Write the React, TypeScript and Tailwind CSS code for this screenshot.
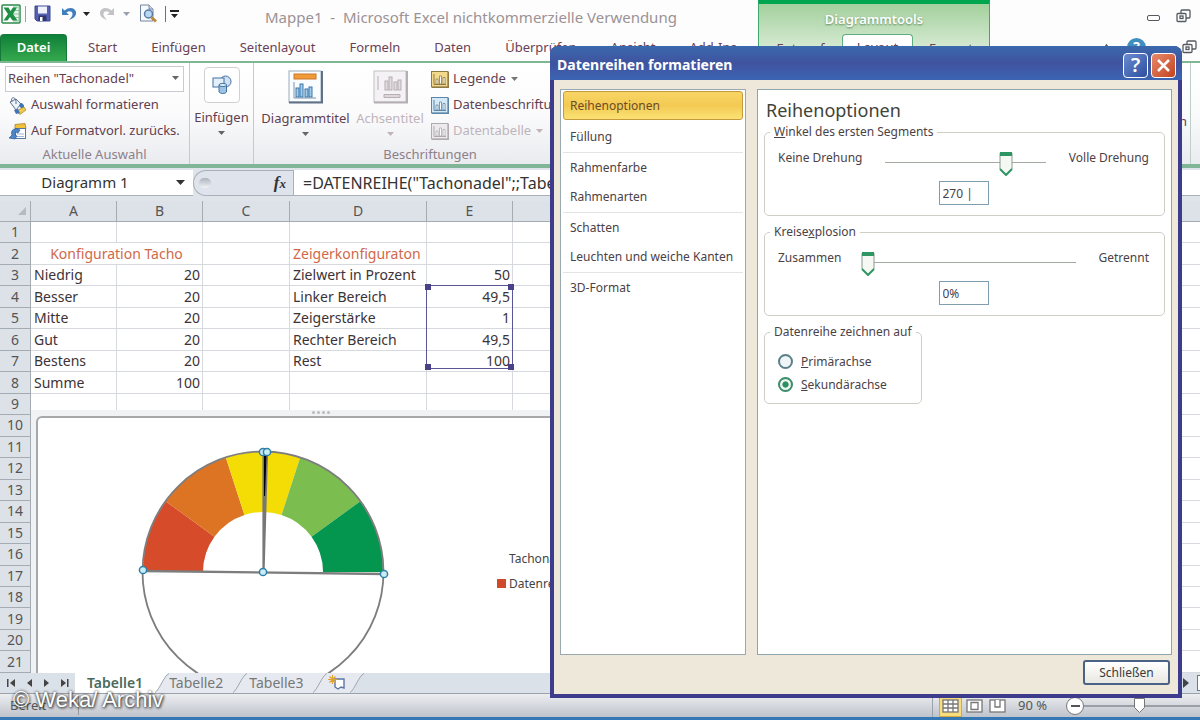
import { ReactNode, useState } from "react";

const ui = "font-['Noto_Sans','Open_Sans',sans-serif]";

const columns = ["A", "B", "C", "D", "E", "F"];

const cells: Record<string, string> = {
  A3: "Niedrig", A4: "Besser", A5: "Mitte", A6: "Gut", A7: "Bestens", A8: "Summe",
  B3: "20", B4: "20", B5: "20", B6: "20", B7: "20", B8: "100",
  D2: "Zeigerkonfiguraton", D3: "Zielwert in Prozent", D4: "Linker Bereich",
  D5: "Zeigerstärke", D6: "Rechter Bereich", D7: "Rest",
  E3: "50", E4: "49,5", E5: "1", E6: "49,5", E7: "100",
};

const optionGroups = [
  ["Reihenoptionen", "Füllung"],
  ["Rahmenfarbe", "Rahmenarten"],
  ["Schatten", "Leuchten und weiche Kanten"],
  ["3D-Format"],
];

function Caret({ className = "" }: { className?: string }) {
  return (
    <svg width="7" height="4" viewBox="0 0 7 4" className={className} fill="currentColor">
      <path d="M0 0h7L3.500 4z" />
    </svg>
  );
}

/* ---------- icons ---------- */

function ExcelLogo() {
  return (
    <svg width="20" height="20" viewBox="0 0 20 20">
      <rect x="1" y="1" width="18" height="18" rx="1" fill="#fff" stroke="#2b8a4b" strokeWidth="1.500" />
      <path d="M12 3h6v14h-6" fill="#e8f4ea" stroke="#8dc29c" />
      <path d="M12 6.500h6M12 10h6M12 13.500h6" stroke="#8dc29c" />
      <path d="M2.500 3.500h5l2 3.500L12 3.500h4L12 10l4.500 6.500h-5L9 13l-2.500 3.500h-4L7 10z" fill="#1f8f45" />
    </svg>
  );
}

function SaveIcon() {
  return (
    <svg width="17" height="17" viewBox="0 0 17 17">
      <path d="M1 1h15v15H3l-2-2z" fill="#5560b4" stroke="#3d468f" />
      <rect x="4" y="1.500" width="9" height="7" fill="#eef1fb" />
      <rect x="4.500" y="10.500" width="8" height="5.500" fill="#2f3670" />
      <rect x="6" y="12" width="2.500" height="4" fill="#fff" />
    </svg>
  );
}

function UndoIcon({ color, flip }: { color: string; flip?: boolean }) {
  return (
    <svg width="16" height="16" viewBox="0 0 16 16" className={flip ? "-scale-x-100" : ""}>
      <path d="M1 2v7h7L5.500 6.500C8 4.500 11 5 11.500 7.500c.4 2.500-1.500 4-3.500 6.500 5-1.500 7.500-4.500 7-8C14.300 2 8.500 0 3.500 4.500z" fill={color} />
    </svg>
  );
}

function PreviewIcon() {
  return (
    <svg width="19" height="19" viewBox="0 0 19 19">
      <path d="M1.500 1h8.500l4 4v12H1.500z" fill="#f7fafd" stroke="#7285a3" />
      <path d="M10 1v4h4" fill="#cfdcec" stroke="#7285a3" />
      <circle cx="9.500" cy="10" r="4" fill="#b9d7ef" stroke="#587ca6" strokeWidth="1.500" />
      <path d="M12.500 13.500l4.500 4" stroke="#b98a3a" strokeWidth="3" />
    </svg>
  );
}

function BucketIcon() {
  return (
    <svg width="19" height="19" viewBox="0 0 19 19">
      <path d="M2 6l6-3 5 5-5 6z" fill="#eef3f9" stroke="#5a6f8f" />
      <path d="M4 6c-2-5 3-6 4-1v3" fill="none" stroke="#5a6f8f" />
      <path d="M12 7c3 0 4.500 2 4 5l-2 1-3-3z" fill="#3f74b8" />
      <path d="M8 15l8-4 2 3-6 4.500z" fill="#efc94c" stroke="#a4812a" strokeWidth=".7" />
      <path d="M6 14l4-1 2 4-4 1z" fill="#3f74b8" />
    </svg>
  );
}

function ResetIcon() {
  return (
    <svg width="19" height="19" viewBox="0 0 19 19">
      <path d="M7 2.500l10-1 1 5H7z" fill="#f0c13b" stroke="#a7832b" strokeWidth=".8" />
      <rect x="7.500" y="6.500" width="10" height="10" fill="#fff" stroke="#56779f" />
      <path d="M9 12h7M9 14.500h7" stroke="#9fb7d3" />
      <path d="M1 16l3-3c-2-5 3-8 8-5l-2 3c-3-1-4 0-3 2l2 1-2 3z" fill="#4b86c6" stroke="#2c5c95" strokeWidth=".7" />
    </svg>
  );
}

function ShapesIcon() {
  return (
    <svg width="20" height="20" viewBox="0 0 20 20" stroke="#41719f">
      <circle cx="13.500" cy="6.500" r="5.500" fill="#cfe2f3" />
      <rect x="1" y="3" width="11" height="9" fill="#e3f0fa" />
      <path d="M7 10v7c1.500 2 6 2 7.500 0v-7z" fill="#9cc3e4" />
      <ellipse cx="10.800" cy="10" rx="3.800" ry="1.600" fill="#dcecf8" />
    </svg>
  );
}

function BigChartIcon({ muted }: { muted?: boolean }) {
  const bar = muted ? "#e2dbdf" : "#9fcdec";
  const line = muted ? "#b8aeb4" : "#3c75a8";
  return (
    <svg width="35" height="34" viewBox="0 0 35 34">
      <rect x="1" y="1" width="32" height="31" fill={muted ? "#f4f2f4" : "#fafdff"} stroke={muted ? "#c4bec2" : "#9aa9ba"} />
      <path d="M1 32.500h33V1" fill="none" stroke={muted ? "#b5afb3" : "#5f7186"} strokeWidth="2" />
      {!muted && <rect x="6" y="4" width="22" height="5" fill="#f29a36" stroke="#c9762a" />}
      <g transform={muted ? "translate(4 -7)" : ""} fill={bar} stroke={line}>
        <rect x="8" y="18" width="3" height="9" />
        <rect x="12" y="14" width="3" height="13" />
        <rect x="17" y="19" width="3" height="8" />
        <rect x="21" y="17" width="3" height="10" />
      </g>
      {muted ? (
        <path d="M5 6v14M11 24.500h16v3H11z" fill="#ddd6da" stroke="#b8aeb4" />
      ) : (
        <path d="M6 12v16h22" fill="none" stroke="#7a93ab" />
      )}
    </svg>
  );
}

function SmallChartIcon({ bg, accent }: { bg: string; accent: string }) {
  return (
    <svg width="18" height="17" viewBox="0 0 18 17">
      <rect x=".5" y=".5" width="16.500" height="15.500" fill={bg} stroke={accent} />
      <path d="M1 16.500h16.500V1" fill="none" stroke={accent} strokeWidth="1.500" />
      <path d="M3 3v10.500h12" fill="none" stroke={accent} />
      <path d="M5 8h2v5H5zM8.500 5h2v8h-2zM12 6.500h2V13h-2z" fill="#fff" stroke={accent} strokeWidth=".8" />
    </svg>
  );
}

function RestoreIcon() {
  return (
    <svg width="15" height="14" viewBox="0 0 15 14" fill="#fff" stroke="#555a62" strokeWidth="1.300">
      <rect x="5" y="1" width="9" height="8" rx="1" />
      <rect x="1" y="4.500" width="9" height="8" rx="1" />
      <rect x="4" y="7" width="3" height="2.500" />
    </svg>
  );
}

/* ---------- ribbon ---------- */

function Tab({ children }: { children: ReactNode }) {
  return <button className="px-[17px] text-[#6a4156] whitespace-nowrap">{children}</button>;
}

function Header() {
  return (
    <header className="flex h-[61px] bg-[#fdfdfd] shrink-0">
      <div className="w-[758px] flex flex-col shrink-0 overflow-hidden">
        <div className="flex items-center h-[33px] pl-px pb-[6px] text-[#222]">
          <ExcelLogo />
          <span className="w-px h-4 bg-gray-400 ml-1 mr-2" />
          <button aria-label="Speichern"><SaveIcon /></button>
          <button aria-label="Rückgängig" className="flex items-center gap-[6px] ml-[10px]">
            <UndoIcon color="#3f7fbd" />
            <Caret />
          </button>
          <button aria-label="Wiederholen" className="flex items-center gap-2 ml-[9px] text-gray-400">
            <UndoIcon color="#c3c3c6" flip />
            <Caret />
          </button>
          <button aria-label="Seitenansicht" className="ml-[9px]"><PreviewIcon /></button>
          <span className="w-px h-4 bg-gray-500 ml-[7px]" />
          <button aria-label="Symbolleiste anpassen" className="ml-1 flex flex-col items-center gap-[2px]">
            <span className="w-[9px] h-[2px] bg-[#222]" />
            <Caret />
          </button>
          <h1 className="ml-[86px] pt-2 text-[15px] text-[#9b9295] whitespace-pre">
            Mappe1  -  Microsoft Excel nichtkommerzielle Verwendung
          </h1>
        </div>
        <nav className="flex h-7 text-[13px] items-stretch pt-px">
          <button className="w-[67px] mr-1 rounded-t bg-linear-to-b from-[#0c8038] to-[#35a94e] border border-[#16773a] border-b-0 text-white font-semibold">
            Datei
          </button>
          <Tab>Start</Tab>
          <Tab>Einfügen</Tab>
          <Tab>Seitenlayout</Tab>
          <Tab>Formeln</Tab>
          <Tab>Daten</Tab>
          <Tab>Überprüfen</Tab>
          <Tab>Ansicht</Tab>
          <Tab>Add-Ins</Tab>
        </nav>
      </div>
      <div className="w-[232px] shrink-0 flex flex-col border-t-4 border-x border-t-[#00a64f] border-x-[#3fa86a] bg-linear-to-b from-[#a3d09d] to-[#e6f2e3]">
        <div className="h-8 flex items-center justify-center text-[13px] font-semibold text-white [text-shadow:0_1px_2px_#5c8a5c]">
          Diagrammtools
        </div>
        <div className="flex flex-1 text-[13px] text-[#6a4156]">
          <button className="w-[83px]">Entwurf</button>
          <button className="w-[71px] -mt-[2px] bg-white border border-[#5fae7f] border-b-0 rounded-t">Layout</button>
          <button className="flex-1">Format</button>
        </div>
      </div>
      <div className="flex-1 flex flex-col items-end">
        <div className="flex gap-4 items-center h-[31px] pr-[9px]">
          <button aria-label="Minimieren" className="w-[13px] h-[6px] mt-1 rounded-xs border border-[#555a62]" />
          <button aria-label="Wiederherstellen"><RestoreIcon /></button>
        </div>
        <div className="flex items-center gap-3 h-7 pr-[3px] mt-[2px]">
          <svg width="9" height="8" viewBox="0 0 9 8" fill="none" stroke="#555a62" strokeWidth="1.500" className="mr-1">
            <path d="M1 7l3.500-5L8 7" />
          </svg>
          <button aria-label="Hilfe" className="size-[19px] rounded-full bg-[#3f8fc0] text-white text-sm font-bold leading-none mr-6">?</button>
          <button aria-label="Fenster wiederherstellen"><RestoreIcon /></button>
        </div>
      </div>
    </header>
  );
}

function Ribbon() {
  return (
    <section className="flex h-[107px] shrink-0 border-t-2 border-[#7fb795] border-b-4 border-b-[#80b598] bg-linear-to-b from-white via-[#fbfbfc] to-[#e9ebef] text-[13px] text-[#5f3f50]">
      <div className="w-[190px] shrink-0 border-r border-[#bcd0c8] flex flex-col px-[5px] pt-[3px]">
        <div className="relative">
          <select
            aria-label="Diagrammelement"
            className="block w-full h-[26px] appearance-none border border-[#c8ccd2] bg-white px-[2px] outline-none"
          >
            <option>Reihen "Tachonadel"</option>
          </select>
          <Caret className="absolute right-[5px] top-[10px] text-[#666] pointer-events-none" />
        </div>
        <button className="h-[26px] flex items-center gap-1 pl-[3px]">
          <BucketIcon /> Auswahl formatieren
        </button>
        <button className="h-[26px] flex items-center gap-1 pl-[3px] whitespace-nowrap">
          <ResetIcon /> Auf Formatvorl. zurücks.
        </button>
        <div className="text-center text-[#8d8089] leading-5">Aktuelle Auswahl</div>
      </div>
      <button className="w-16 shrink-0 border-r border-[#bcd0c8] flex flex-col items-center pt-1">
        <span className="size-9 flex items-center justify-center border border-[#d3d0d4] rounded-sm bg-white">
          <ShapesIcon />
        </span>
        <span className="mt-1 leading-5">Einfügen</span>
        <Caret className="mt-1 text-[#666]" />
      </button>
      <div className="flex flex-1 flex-col min-w-0">
        <div className="flex h-[81px]">
          <button className="w-[103px] shrink-0 flex flex-col items-center pt-[7px]">
            <BigChartIcon />
            <span className="mt-1 leading-5">Diagrammtitel</span>
            <Caret className="mt-1 text-[#666]" />
          </button>
          <button disabled className="w-[66px] shrink-0 flex flex-col items-center pt-[7px] text-[#bfb4ba]">
            <BigChartIcon muted />
            <span className="mt-1 leading-5">Achsentitel</span>
            <Caret className="mt-1" />
          </button>
          <div className="ml-2 pt-[3px] flex flex-col whitespace-nowrap">
            <button className="h-[26px] flex items-center gap-1">
              <SmallChartIcon bg="#f3d98b" accent="#8f7a45" /> Legende <Caret className="ml-px text-[#777]" />
            </button>
            <button className="h-[26px] flex items-center gap-1">
              <SmallChartIcon bg="#d5e8f6" accent="#5c86a8" /> Datenbeschriftungen
            </button>
            <button disabled className="h-[26px] flex items-center gap-1 text-[#bfb4ba]">
              <SmallChartIcon bg="#eceaec" accent="#b0a9ae" /> Datentabelle <Caret className="ml-px" />
            </button>
          </div>
        </div>
        <div className="w-[352px] text-center text-[#8d8089] leading-5">Beschriftungen</div>
      </div>
      <div className="w-[86px] shrink-0 flex items-center justify-end border-l border-[#bcd0c8]">
        <span className="h-full flex items-center border-r border-[#bcd0c8] pt-4 pr-[3px] mr-[9px]">Analysen</span>
      </div>
    </section>
  );
}

function FormulaBar() {
  return (
    <div className="h-[33px] shrink-0 flex items-stretch pt-[2px] pb-[5px] bg-[#dfe4ea] text-[#333]">
      <button className="w-[193px] flex items-center bg-white border-b border-[#a9b0b8] pr-2 text-[15px]">
        <span className="flex-1 text-center pr-[6px]">Diagramm 1</span>
        <svg width="9" height="5" viewBox="0 0 9 5"><path d="M0 0h9L4.500 5z" fill="#333" /></svg>
      </button>
      <div className="w-[100px] flex items-center justify-between rounded-l-full border border-r-0 border-[#a9b0b8] bg-[#dfe4ec] pl-[5px] pr-[7px]">
        <span className="w-3 h-[10px] rounded-full bg-linear-to-b from-[#aeb4bd] to-[#f1f3f6]" />
        <span className="font-['Liberation_Serif',serif] italic font-bold text-[17px]">f<span className="text-[13px]">x</span></span>
      </div>
      <input
        aria-label="Formel"
        className="flex-1 min-w-0 bg-white border-l border-b border-[#a9b0b8] pl-[9px] text-base outline-none"
        defaultValue={'=DATENREIHE("Tachonadel";;Tabelle1!$E$4:$E$7;2)'}
      />
    </div>
  );
}

/* ---------- sheet ---------- */

function SeriesMarker() {
  const knob = "absolute size-[6px] bg-[#4a4289]";
  return (
    <span className="absolute z-10 -left-px -top-px w-full h-[400%] border border-[#5a5596] box-content">
      <span className={`${knob} -left-[2px] -top-[2px]`} />
      <span className={`${knob} -right-[2px] -top-[2px]`} />
      <span className={`${knob} -left-[2px] -bottom-[2px]`} />
      <span className={`${knob} -right-[2px] -bottom-[2px]`} />
    </span>
  );
}

function Sheet() {
  const head = "border-r border-b border-[#a5abb3] bg-[#dde2e8] font-normal p-0";
  return (
    <table className="w-full h-full table-fixed border-separate border-spacing-0 text-sm leading-5 text-[#3d3236]">
      <colgroup>
        <col className="w-[31px]" />
        <col className="w-[86px]" />
        <col className="w-[86px]" />
        <col className="w-[87px]" />
        <col className="w-[137px]" />
        <col className="w-[86px]" />
        <col />
      </colgroup>
      <thead className="text-[#555]">
        <tr className="h-5">
          <th className={head}>
            <svg width="8" height="8" viewBox="0 0 8 8" className="ml-auto mr-1"><path d="M8 0v8H0z" fill="#b4bac2" /></svg>
          </th>
          {columns.map((c) => (
            <th key={c} className={`${head} last:border-r-0`}>{c === "F" ? "" : c}</th>
          ))}
        </tr>
      </thead>
      <tbody>
        {Array.from({ length: 21 }, (_, i) => i + 1).map((row) => (
          <tr key={row}>
            <th className={`${head} text-[#555]`}>{row}</th>
            {columns.map((c) => {
              if (row === 2 && c === "A") {
                return (
                  <td key={c} colSpan={2} className="p-0 border-r border-b border-[#d6dade] text-center text-[#d0684a]">
                    Konfiguration Tacho
                  </td>
                );
              }
              if (row === 2 && c === "B") return null;
              const align = c === "B" || c === "E" ? "text-right" : "text-left";
              const color = row === 2 ? "text-[#d0684a]" : "";
              return (
                <td key={c} className={`relative pl-[3px] pr-[2px] py-0 border-r border-b border-[#d6dade] last:border-r-0 whitespace-nowrap ${align} ${color}`}>
                  {cells[c + row]}
                  {c === "E" && row === 4 && <SeriesMarker />}
                </td>
              );
            })}
          </tr>
        ))}
      </tbody>
    </table>
  );
}

// point on a circle around the gauge centre, angle in degrees from the left end
function polar(r: number, deg: number) {
  const a = (deg * Math.PI) / 180;
  return `${(126 - r * Math.cos(a)).toFixed(2)} ${(126 - r * Math.sin(a)).toFixed(2)}`;
}

function Gauge() {
  const colors = ["#d64b29", "#dd7424", "#f4dc05", "#7cbd50", "#04954f"];
  const knobs = [[6, 124], [247, 128], [126, 126], [126, 6], [130, 6]];
  return (
    <svg width="252" height="252" viewBox="0 0 252 252" className="block">
      {colors.map((fill, i) => (
        <path
          key={fill}
          fill={fill}
          d={`M${polar(120, i * 36)}A120 120 0 0 1 ${polar(120, i * 36 + 36)}L${polar(60, i * 36 + 36)}A60 60 0 0 0 ${polar(60, i * 36)}z`}
        />
      ))}
      <circle cx="126" cy="126" r="120.500" fill="none" stroke="#7d7d7d" strokeWidth="1.800" />
      <path d="M6 125L247 128" stroke="#7d7d7d" strokeWidth="2.400" />
      <path d="M126.500 126V6M126.500 126L130 6" stroke="#777" strokeWidth="2.200" />
      <path d="M127.500 50V8h1.500z" fill="#000" stroke="#000" />
      {knobs.map(([x, y]) => (
        <circle key={`${x}-${y}`} cx={x} cy={y} r="3.600" fill="#c9edf7" stroke="#2f7fa8" strokeWidth="1.500" />
      ))}
    </svg>
  );
}

function ChartObject() {
  return (
    <div className="absolute left-[31px] right-[30px] top-[209px] bottom-0 bg-[#f1f2f3] pt-[6px] pl-[5px] overflow-hidden">
      <div className="absolute top-px left-[281px] flex gap-[2px]">
        {[0, 1, 2, 3].map((n) => <span key={n} className="size-[3px] rounded-full bg-[#bbb]" />)}
      </div>
      <div className="h-full border-t-2 border-l-2 border-[#a6a8aa] rounded-tl-md bg-white flex pt-7 pl-[99px]">
        <Gauge />
        <div className="mt-[100px] ml-[108px] text-xs text-[#444] whitespace-nowrap">
          <div className="h-[25px] pl-3 leading-[25px]">Tachonadel</div>
          <div className="h-[25px] flex items-center gap-[3px]">
            <span className="size-[9px] bg-[#cf4a2a]" /> Datenreihen
          </div>
        </div>
      </div>
    </div>
  );
}

function Slash({ left, right }: { left: string; right: string }) {
  return (
    <svg width="14" height="20" viewBox="0 0 16 20" preserveAspectRatio="none" className="shrink-0">
      <path d="M0 0h16C10 3 6 18 0 19z" fill={left} />
      <path d="M16 0v20H0C6 18 10 1 16 0z" fill={right} />
      <path d="M0 19.500C5 17 10 3 16 .5" fill="none" stroke="#9aa1ab" />
    </svg>
  );
}

function SheetTabs() {
  return (
    <div className="h-5 shrink-0 flex items-center bg-[#dbe1e9] text-sm leading-[18px] text-[#777]">
      <div className="w-[75px] pl-[7px]">
        <svg width="62" height="8" viewBox="0 0 62 8" fill="#444">
          <path d="M0 0h1.500v8H0zM8 0v8L3 4zM25 0v8L20 4zM37 0v8l5-4zM54 0v8l5-4zM60 0h1.500v8H60z" />
        </svg>
      </div>
      <button className="h-5 bg-white px-3 font-semibold text-[#4a6a5c]">Tabelle1</button>
      <Slash left="#fff" right="#e6eaf0" />
      <button className="h-5 bg-[#e6eaf0] pr-[10px]">Tabelle2</button>
      <Slash left="#e6eaf0" right="#e6eaf0" />
      <button className="h-5 bg-[#e6eaf0] pl-[2px] pr-[10px]">Tabelle3</button>
      <Slash left="#e6eaf0" right="#e6eaf0" />
      <button aria-label="Neues Blatt" className="h-5 bg-[#e6eaf0] pl-px pr-1">
        <svg width="18" height="16" viewBox="0 0 18 16">
          <path d="M6 4h10v9l-3-1-3 2-3-2V4" fill="#fff" stroke="#5b76a6" strokeWidth="1.400" />
          <path d="M4.500 0v9M0 4.500h9M1.500 1.500l6 6M7.500 1.500l-6 6" stroke="#e0a432" strokeWidth="1.200" />
        </svg>
      </button>
      <Slash left="#e6eaf0" right="#dbe1e9" />
      <div className="ml-auto flex items-center gap-2">
        <svg width="6" height="10" viewBox="0 0 6 10"><path d="M0 0l6 5-6 5z" fill="#444" /></svg>
        <span className="w-[3px] h-4 border border-r-0 border-[#777] bg-white" />
      </div>
    </div>
  );
}

function ViewIcon({ d }: { d: string }) {
  return (
    <svg width="17" height="14" viewBox="0 0 17 14" fill="#fff" stroke="#777" strokeWidth="1.300">
      <rect x="1" y="1" width="15" height="12" />
      <path d={d} />
    </svg>
  );
}

function StatusBar() {
  return (
    <footer className="h-[27px] shrink-0 flex items-center border-t border-[#9ca2ab] border-b-[3px] border-b-[#3577b4] bg-linear-to-b from-[#eceef1] to-[#bfc3cb] text-[13px] text-[#555]">
      <span className="w-[79px] pl-[10px] border-r border-[#999]">Bereit</span>
      <div className="ml-auto flex items-center h-full border-l border-[#9ba1aa] pl-[6px]">
        <button aria-label="Normal" className="h-full px-[2px] bg-[#f8dd7c] border border-[#d5a93c]"><ViewIcon d="M1 5h15M1 9h15M6 1v12M11 1v12" /></button>
        <button aria-label="Seitenlayout" className="ml-1"><ViewIcon d="M5 3.500h7v7H5z" /></button>
        <button aria-label="Umbruchvorschau" className="ml-[6px]"><ViewIcon d="M6 1v7h5V1" /></button>
        <span className="w-[43px] ml-3">90 %</span>
        <button aria-label="Verkleinern" className="ml-[5px] size-[18px] flex items-center justify-center rounded-full border border-[#777] bg-white">
          <span className="w-[9px] h-[2px] bg-[#555]" />
        </button>
        <div className="w-[116px] flex items-center">
          <span className="w-[50px] h-[2px] bg-[#9a9ea6]" />
          <svg width="11" height="15" viewBox="0 0 11 15"><path d="M.5.5h10v9l-5 5-5-5z" fill="#fff" stroke="#777" /></svg>
          <span className="flex-1 h-[2px] bg-[#9a9ea6]" />
        </div>
      </div>
    </footer>
  );
}

/* ---------- dialog ---------- */

function Slider({ label, max, value, onChange }: { label: string; max: number; value: number; onChange: (v: number) => void }) {
  return (
    <div className="relative flex-1 h-6 flex items-center">
      <span className="w-full h-px bg-[#a3aaa0]" />
      <svg
        width="14" height="25" viewBox="0 0 14 25"
        className="absolute top-px -translate-x-1/2"
        style={{ left: `${(value / max) * 100}%` }}
      >
        <path d="M1 2h12v16l-6 6-6-6z" fill="#f5f8f3" stroke="#8b9a90" />
        <path d="M1 1h12v4H1z" fill="#2f9563" />
        <path d="M1 18l6 6 6-6" fill="none" stroke="#2f9563" strokeWidth="2" />
      </svg>
      <input
        type="range" aria-label={label} min={0} max={max} value={value}
        onChange={(e) => onChange(Number(e.target.value))}
        className="absolute inset-0 w-full opacity-0"
      />
    </div>
  );
}

const fieldset = "rounded-[5px] border border-[#cfcdc6] pl-[13px]";
const legend = "px-1 -ml-2 leading-5 whitespace-nowrap";
const valueBox = "block w-[50px] h-6 mx-auto mt-[7px] border border-[#7f9db0] bg-white px-[3px] outline-none";

function Dialog() {
  const [active, setActive] = useState("Reihenoptionen");
  const [angle, setAngle] = useState(270);
  const [explosion, setExplosion] = useState(0);
  const [axis, setAxis] = useState("Sekundärachse");

  return (
    <div
      role="dialog"
      aria-label="Datenreihen formatieren"
      className="absolute left-[550px] right-[18px] top-[46px] bottom-[22px] flex flex-col rounded-t-lg bg-[#3d3c8c] text-xs text-[#4a4246] overflow-hidden"
    >
      <div className="h-[34px] shrink-0 flex items-center gap-[3px] pl-[7px] pr-[6px] pt-1 bg-linear-to-b from-[#3a69ad] via-[#3f539f] to-[#3c64b4]">
        <h2 className="flex-1 font-bold text-sm text-white">Datenreihen formatieren</h2>
        <button aria-label="Hilfe" className="size-[25px] rounded border border-white bg-linear-to-br from-[#6c8cd0] to-[#2d4fa0] text-white font-semibold text-xl leading-none">?</button>
        <button aria-label="Dialog schließen" className="size-[25px] flex items-center justify-center rounded border border-white bg-linear-to-br from-[#e58a6a] to-[#c4411d]">
          <svg width="13" height="13" viewBox="0 0 13 13" stroke="#fff" strokeWidth="2.500"><path d="M1 1l11 11M12 1L1 12" /></svg>
        </button>
      </div>
      <div className="flex-1 min-h-0 mx-1 mb-1 flex flex-col bg-[#ede8d9] pt-[9px] px-[6px]">
        <div className="flex-1 min-h-0 flex gap-[11px]">
          <ul className="w-[186px] shrink-0 px-[2px] pt-px bg-white border border-[#9aa9b0]">
            {optionGroups.map((group) => (
              <li key={group[0]} className="border-b border-[#e4e4e4] pb-px last:border-b-0">
                {group.map((name) => (
                  <button
                    key={name}
                    onClick={() => setActive(name)}
                    className={
                      name === active
                        ? "block w-full h-[29px] mb-[2px] px-[6px] text-left whitespace-nowrap rounded-[3px] border border-[#c49a3c] bg-linear-to-b from-[#f8d565] via-[#f3ca52] to-[#fbe274] text-[#6b4a26]"
                        : "block w-full h-[29px] pt-px px-[7px] text-left whitespace-nowrap"
                    }
                  >
                    {name}
                  </button>
                ))}
              </li>
            ))}
          </ul>
          <div className="flex-1 min-w-0 bg-white border border-[#8fa5ad] px-[6px] pt-2">
            <h3 className="pl-[2px] text-lg leading-6 text-[#3f4338]">Reihenoptionen</h3>
            <fieldset className={`${fieldset} pr-[15px] h-[94px]`}>
              <legend className={legend}><u>W</u>inkel des ersten Segments</legend>
              <div className="flex items-center gap-[23px] pt-2 leading-6">
                <span className="-mt-2">Keine Drehung</span>
                <Slider label="Winkel des ersten Segments" max={360} value={angle} onChange={setAngle} />
                <span className="-mt-2">Volle Drehung</span>
              </div>
              <input aria-label="Winkel" className={valueBox} value={angle + " |"} onChange={(e) => setAngle(parseInt(e.target.value) || 0)} />
            </fieldset>
            <fieldset className={`${fieldset} pr-[15px] h-[94px] mt-[6px]`}>
              <legend className={legend}>Kreise<u>x</u>plosion</legend>
              <div className="flex items-center gap-[23px] pt-2 leading-6">
                <span className="-mt-2 mr-1">Zusammen</span>
                <Slider label="Kreisexplosion" max={400} value={explosion} onChange={setExplosion} />
                <span className="-mt-2">Getrennt</span>
              </div>
              <input aria-label="Explosion" className={valueBox} value={explosion + "%"} onChange={(e) => setExplosion(parseInt(e.target.value) || 0)} />
            </fieldset>
            <fieldset className={`${fieldset} w-[158px] h-[82px] mt-[6px]`}>
              <legend className={legend}>Datenreihe zeichnen auf</legend>
              <div className="pt-2">
                {["Primärachse", "Sekundärachse"].map((name) => (
                  <label key={name} className="flex items-center gap-2 h-[23px]">
                    <input
                      type="radio" name="achse" checked={axis === name} onChange={() => setAxis(name)}
                      className="appearance-none size-[15px] rounded-full border-2 border-[#5b8089] bg-[#eff5f6] checked:border-[#3d8d6d] checked:bg-radial checked:from-[#2b8f62] checked:from-35% checked:to-[#eaf5ef] checked:to-45%"
                    />
                    <span><u>{name[0]}</u>{name.slice(1)}</span>
                  </label>
                ))}
              </div>
            </fieldset>
          </div>
        </div>
        <div className="h-[39px] shrink-0 flex justify-end pt-[5px] pr-[2px]">
          <button className="w-[87px] h-[25px] rounded-[3px] border-2 border-[#4a6385] bg-linear-to-b from-white to-[#e9e8e2] text-[#3b3b3b]">Schließen</button>
        </div>
      </div>
    </div>
  );
}

export default function App() {
  return (
    <main className={`relative h-screen min-h-[560px] flex flex-col overflow-hidden bg-white ${ui}`}>
      <Header />
      <Ribbon />
      <FormulaBar />
      <div className="relative flex-1 min-h-0 overflow-hidden">
        <Sheet />
        <ChartObject />
      </div>
      <SheetTabs />
      <StatusBar />
      <Dialog />
      <div className="absolute left-[13px] bottom-2 font-['Liberation_Sans',sans-serif] text-[22px] leading-6 text-white [text-shadow:0_0_3px_#333,1px_1px_3px_#333]">
        © Weka/ Archiv
      </div>
    </main>
  );
}
